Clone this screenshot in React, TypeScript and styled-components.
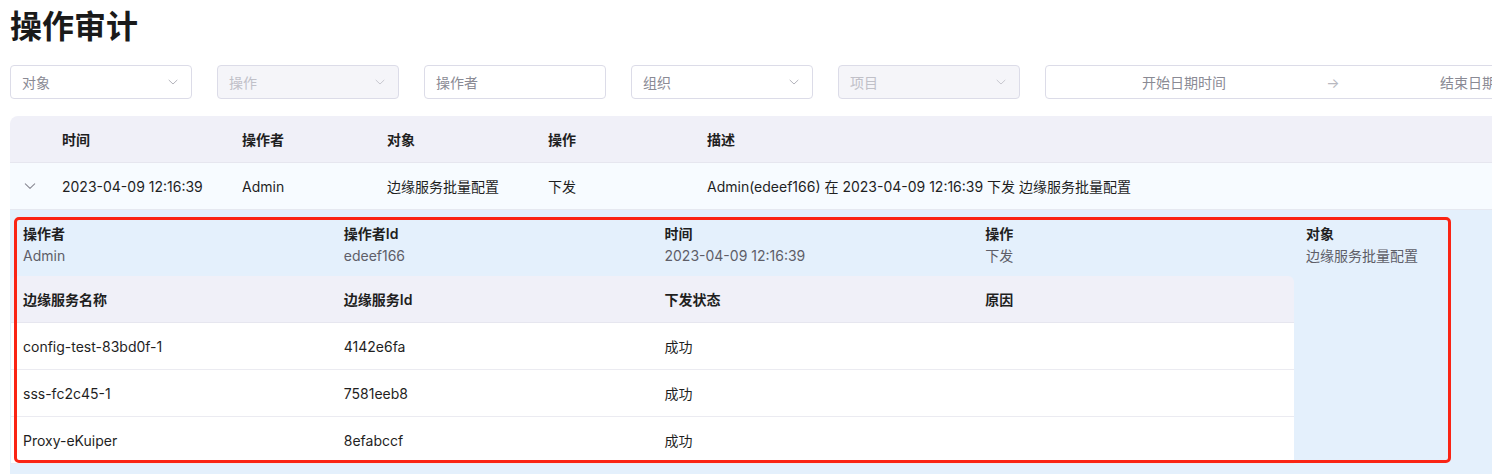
import React from "react";
import styled, { createGlobalStyle } from "styled-components";

const Global = createGlobalStyle`
  html, body { margin: 0; padding: 0; background: #fff; overflow: hidden; }
  body { font-family: Inter, "Noto Sans CJK SC", sans-serif; font-size: 14px; color: #1f1f1f; }
  * { box-sizing: border-box; }
`;

const Page = styled.div`
  padding: 0 10px;
  width: 1700px;
`;

const Title = styled.h1`
  margin: 0;
  height: 48px;
  line-height: 48px;
  font-size: 32px;
  font-weight: 700;
  color: #1a1a1a;
  font-family: "Noto Sans CJK SC", sans-serif;
`;

const Filters = styled.div`
  display: flex;
  gap: 25px;
  margin-top: 17px;
`;

const Field = styled.div<{ $disabled?: boolean; $w?: number }>`
  width: ${(p) => p.$w ?? 182}px;
  height: 34px;
  border: 1px solid #dcdce8;
  border-radius: 4px;
  background: ${(p) => (p.$disabled ? "#f5f5f9" : "#fff")};
  color: ${(p) => (p.$disabled ? "#c0c0c8" : "#8a8a94")};
  display: flex;
  align-items: center;
  justify-content: space-between;
  padding: 0 12px 0 11px;
  font-size: 14px;
  flex-shrink: 0;
`;

const RangeField = styled(Field)`
  padding: 0;
  justify-content: flex-start;
`;

const RangeInput = styled.span`
  flex: 0 0 276px;
  text-align: center;
  color: #8a8a94;
  white-space: nowrap;
`;

const RangeSep = styled.span`
  flex: 0 0 22px;
  text-align: center;
  color: #b8b8c0;
`;

const Chevron = ({ color = "#b4b4bc", size = 12 }: { color?: string; size?: number }) => (
  <svg width={size} height={size} viewBox="0 0 12 12" fill="none">
    <path d="M2 4.2 L6 8 L10 4.2" stroke={color} strokeWidth="1" strokeLinecap="round" strokeLinejoin="round" />
  </svg>
);

const Table = styled.div`
  margin-top: 17px;
  width: 1605px;
  border-radius: 8px 8px 0 0;
  overflow: hidden;
`;

const cols = "40px 180px 145px 161px 159px 1fr";

const HeadRow = styled.div`
  display: grid;
  grid-template-columns: ${cols};
  height: 47px;
  background: #f0f0f8;
  border-bottom: 1px solid #e6e6ef;
  align-items: center;
  font-weight: 600;
`;

const BodyRow = styled.div`
  display: grid;
  grid-template-columns: ${cols};
  height: 47px;
  background: #f7fbff;
  border-bottom: 1px solid #e6e8f0;
  align-items: center;
`;

const Cell = styled.div`
  padding: 0 12px;
  white-space: nowrap;
`;

const ExpandCell = styled.div`
  display: flex;
  justify-content: center;
  align-items: center;
`;

const Expanded = styled.div`
  position: relative;
  background: #e4f0fc;
  padding: 8px 0 12px 1px;
  height: 270px;
`;

const Desc = styled.div`
  display: grid;
  grid-template-columns: repeat(5, 320.75px);
  grid-template-rows: auto auto;
`;

const DescItem = styled.div<{ $tall?: boolean }>`
  padding: 6px 12px 10px;
  display: flex;
  flex-direction: column;
  gap: 2px;
  line-height: 20px;
  grid-row: ${(p) => (p.$tall ? "1 / span 2" : "1")};
`;

const DescLabel = styled.div`
  font-weight: 600;
  color: #1f1f1f;
`;

const DescValue = styled.div`
  color: #5e5e68;
`;

const SubTable = styled.div`
  grid-column: 1 / span 4;
  grid-row: 2;
`;

const subCols = "repeat(4, 320.75px)";

const SubHead = styled.div`
  display: grid;
  grid-template-columns: ${subCols};
  height: 47px;
  align-items: center;
  background: #f0f0f8;
  border-bottom: 1px solid #e6e6ef;
  border-radius: 6px 6px 0 0;
  font-weight: 600;
`;

const SubRow = styled.div`
  display: grid;
  grid-template-columns: ${subCols};
  height: 47px;
  align-items: center;
  background: #fff;
  border-bottom: 1px solid #ebebf1;
`;

const Annotation = styled.div`
  position: absolute;
  left: 4px;
  top: 7px;
  width: 1437px;
  height: 246px;
  border: 3px solid #fa2414;
  border-radius: 5px;
  pointer-events: none;
`;

const descItems = [
  ["操作者", "Admin"],
  ["操作者Id", "edeef166"],
  ["时间", "2023-04-09 12:16:39"],
  ["操作", "下发"],
  ["对象", "边缘服务批量配置"],
];

const subRows = [
  ["config-test-83bd0f-1", "4142e6fa", "成功", ""],
  ["sss-fc2c45-1", "7581eeb8", "成功", ""],
  ["Proxy-eKuiper", "8efabccf", "成功", ""],
];

export default function App() {
  return (
    <>
      <Global />
      <Page>
        <Title>操作审计</Title>
        <Filters>
          <Field>
            <span>对象</span>
            <Chevron />
          </Field>
          <Field $disabled>
            <span>操作</span>
            <Chevron color="#c8c8d0" />
          </Field>
          <Field>
            <span>操作者</span>
          </Field>
          <Field>
            <span>组织</span>
            <Chevron />
          </Field>
          <Field $disabled>
            <span>项目</span>
            <Chevron color="#c8c8d0" />
          </Field>
          <RangeField $w={600}>
            <RangeInput>开始日期时间</RangeInput>
            <RangeSep>→</RangeSep>
            <RangeInput>结束日期时间</RangeInput>
          </RangeField>
        </Filters>

        <Table>
          <HeadRow>
            <Cell />
            <Cell>时间</Cell>
            <Cell>操作者</Cell>
            <Cell>对象</Cell>
            <Cell>操作</Cell>
            <Cell>描述</Cell>
          </HeadRow>
          <BodyRow>
            <ExpandCell>
              <Chevron color="#8c8c96" size={14} />
            </ExpandCell>
            <Cell>2023-04-09 12:16:39</Cell>
            <Cell>Admin</Cell>
            <Cell>边缘服务批量配置</Cell>
            <Cell>下发</Cell>
            <Cell>Admin(edeef166) 在 2023-04-09 12:16:39 下发 边缘服务批量配置</Cell>
          </BodyRow>
          <Expanded>
            <Desc>
              {descItems.map(([l, v], i) => (
                <DescItem key={i} $tall={i === 4}>
                  <DescLabel>{l}</DescLabel>
                  <DescValue>{v}</DescValue>
                </DescItem>
              ))}
              <SubTable>
                <SubHead>
                  <Cell>边缘服务名称</Cell>
                  <Cell>边缘服务Id</Cell>
                  <Cell>下发状态</Cell>
                  <Cell>原因</Cell>
                </SubHead>
                {subRows.map((r, i) => (
                  <SubRow key={i}>
                    {r.map((c, j) => (
                      <Cell key={j}>{c}</Cell>
                    ))}
                  </SubRow>
                ))}
              </SubTable>
            </Desc>
            <Annotation />
          </Expanded>
        </Table>
      </Page>
    </>
  );
}
